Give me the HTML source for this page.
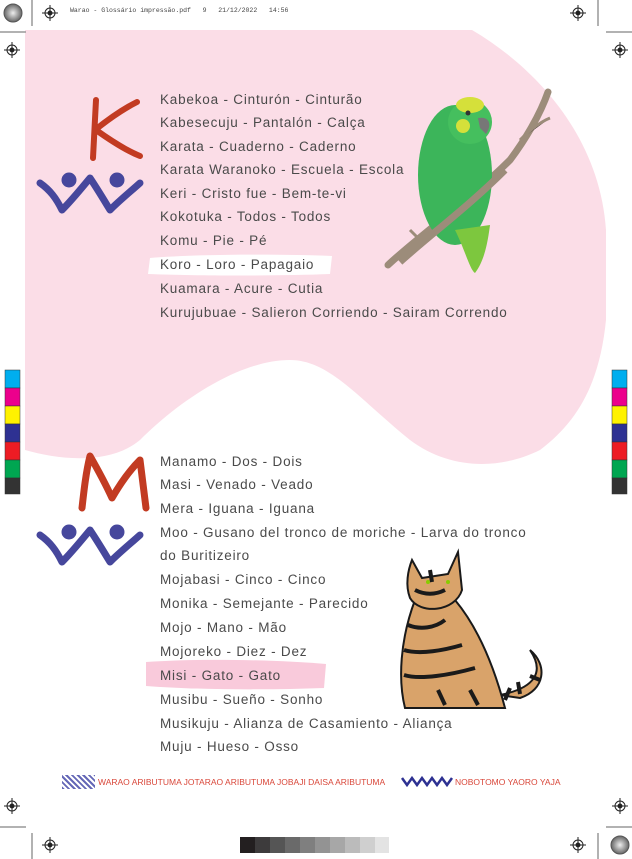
<!DOCTYPE html>
<html><head><meta charset="utf-8"><style>
*{margin:0;padding:0;box-sizing:border-box}
body{width:632px;height:859px;position:relative;background:#fff;overflow:hidden;font-family:"Liberation Sans",sans-serif}
.t{position:absolute;left:160px;font-size:13.5px;color:#4a4a4a;letter-spacing:0.8px;white-space:nowrap;line-height:16px}
.abs{position:absolute}
</style></head><body>
<svg class="abs" style="left:0;top:0" width="632" height="859">
<defs>
<g id="reg" fill="none" stroke="#222" stroke-width="1"><circle cx="0" cy="0" r="5"/><circle cx="0" cy="0" r="2" fill="#222"/><line x1="-8" y1="0" x2="8" y2="0"/><line x1="0" y1="-8" x2="0" y2="8"/></g>
<radialGradient id="g"><stop offset="0" stop-color="#eee"/><stop offset="1" stop-color="#666"/></radialGradient>
</defs>
<!-- pink shape -->
<path d="M25 30 L472 30 C540 70 600 140 606 230 L606 320 C600 380 580 420 540 450 C500 470 450 470 410 440 C360 400 330 360 290 360 C240 360 180 400 140 440 C110 465 60 460 25 450 Z" fill="#fbdde7"/>
<!-- highlights -->
<path d="M150 258 C200 254 280 254 332 256 L330 274 C280 276 200 276 148 274 Z" fill="#fff"/>
<path d="M146 662 C200 658 280 660 326 664 L324 688 C270 690 200 690 146 686 Z" fill="#f9cadb"/>
<!-- crop marks -->
<g stroke="#999" stroke-width="1.5"><line x1="0" y1="32" x2="26" y2="32"/><line x1="606" y1="32" x2="632" y2="32"/><line x1="32" y1="0" x2="32" y2="26"/><line x1="598" y1="0" x2="598" y2="26"/><line x1="0" y1="827" x2="26" y2="827"/><line x1="606" y1="827" x2="632" y2="827"/><line x1="32" y1="833" x2="32" y2="859"/><line x1="598" y1="833" x2="598" y2="859"/></g>
<use href="#reg" x="50" y="13"/><use href="#reg" x="578" y="13"/><use href="#reg" x="12" y="50"/><use href="#reg" x="620" y="50"/><use href="#reg" x="12" y="806"/><use href="#reg" x="620" y="806"/><use href="#reg" x="50" y="845"/><use href="#reg" x="578" y="845"/>
<circle cx="13" cy="13" r="9" fill="url(#g)" stroke="#555"/><circle cx="620" cy="845" r="9" fill="url(#g)" stroke="#555"/>
<!-- color bars -->
<g stroke="#333" stroke-width="0.5">
<rect x="5" y="370" width="15" height="18" fill="#00aeef"/><rect x="5" y="388" width="15" height="18" fill="#ec008c"/><rect x="5" y="406" width="15" height="18" fill="#fff200"/><rect x="5" y="424" width="15" height="18" fill="#2e3192"/><rect x="5" y="442" width="15" height="18" fill="#ed1c24"/><rect x="5" y="460" width="15" height="18" fill="#00a651"/><rect x="5" y="478" width="15" height="16" fill="#333"/>
<rect x="612" y="370" width="15" height="18" fill="#00aeef"/><rect x="612" y="388" width="15" height="18" fill="#ec008c"/><rect x="612" y="406" width="15" height="18" fill="#fff200"/><rect x="612" y="424" width="15" height="18" fill="#2e3192"/><rect x="612" y="442" width="15" height="18" fill="#ed1c24"/><rect x="612" y="460" width="15" height="18" fill="#00a651"/><rect x="612" y="478" width="15" height="16" fill="#333"/>
</g>
<!-- gray scale -->
<rect x="240" y="837" width="15" height="16" fill="#231f20"/><rect x="255" y="837" width="15" height="16" fill="#3d3b3c"/><rect x="270" y="837" width="15" height="16" fill="#555"/><rect x="285" y="837" width="15" height="16" fill="#6a6a6a"/><rect x="300" y="837" width="15" height="16" fill="#7f7f7f"/><rect x="315" y="837" width="15" height="16" fill="#939393"/><rect x="330" y="837" width="15" height="16" fill="#a7a7a7"/><rect x="345" y="837" width="15" height="16" fill="#bbb"/><rect x="360" y="837" width="15" height="16" fill="#cfcfcf"/><rect x="375" y="837" width="14" height="16" fill="#e3e3e3"/>
<!-- K -->
<path d="M96 100 C95 120 94 140 93 158 M95 130 C110 118 125 108 137 102 M96 130 C110 140 125 150 140 156" stroke="#c23b22" stroke-width="6" fill="none" stroke-linecap="round"/>
<!-- W glyphs -->
<g id="w" fill="none" stroke="#46479c" stroke-width="7" stroke-linecap="round" stroke-linejoin="round">
<path d="M40 183 C50 190 56 198 62 210 C72 200 80 190 90 178 C98 190 104 200 110 210 C120 200 130 192 140 183"/>
<circle cx="69" cy="180" r="4" fill="#46479c"/><circle cx="117" cy="180" r="4" fill="#46479c"/>
</g>
<use href="#w" x="0" y="352"/>
<!-- M -->
<path d="M82 508 C84 490 86 472 90 456 C98 470 106 485 112 498 C120 484 130 470 140 460 C142 476 144 492 146 508" stroke="#c23b22" stroke-width="7" fill="none" stroke-linecap="round" stroke-linejoin="round"/>
<!-- parrot -->
<path d="M388 265 C420 235 470 200 510 160 C525 140 540 115 548 92" stroke="#9c8c7a" stroke-width="7" fill="none" stroke-linecap="round"/>
<path d="M520 140 C530 130 540 122 550 118 M420 240 L410 230" stroke="#9c8c7a" stroke-width="3"/>
<ellipse cx="455" cy="175" rx="37" ry="70" fill="#3cb55a"/>
<ellipse cx="470" cy="122" rx="22" ry="22" fill="#45bf5e"/>
<ellipse cx="470" cy="105" rx="14" ry="8" fill="#d5e03a"/>
<ellipse cx="463" cy="126" rx="7" ry="7" fill="#d5e03a"/>
<path d="M478 118 C490 116 492 125 486 134 L480 128 Z" fill="#777"/>
<circle cx="468" cy="113" r="2.5" fill="#333"/>
<path d="M455 230 C465 250 470 270 475 273 C485 260 488 240 490 225 Z" fill="#7dc73e"/>
<path d="M400 262 C430 235 470 205 505 170" stroke="#9c8c7a" stroke-width="7" fill="none"/>
<!-- cat -->
<path d="M520 698 C545 690 548 665 530 650 C545 672 535 688 500 695 Z" fill="#d9a36a" stroke="#1a1a1a" stroke-width="2"/>
<path d="M415 600 C400 640 398 680 405 708 L505 708 C495 670 480 630 455 600 Z" fill="#d9a36a" stroke="#1a1a1a" stroke-width="2"/>
<path d="M412 560 L422 578 L448 574 L458 552 L462 590 C455 612 420 615 410 598 C405 585 408 570 412 560 Z" fill="#d9a36a" stroke="#1a1a1a" stroke-width="2"/>
<g stroke="#1a1a1a" stroke-width="4" fill="none">
<path d="M408 625 C420 630 435 628 445 620 M404 650 C420 655 445 650 462 645 M404 675 C420 680 450 675 475 668 M415 590 C425 595 435 595 445 590 M505 700 L510 688 M520 694 L518 682 M530 676 L540 680 M438 690 L445 705 M470 690 L478 705 M430 570 L432 582"/>
</g>
<circle cx="428" cy="582" r="2" fill="#8c0"/><circle cx="448" cy="582" r="2" fill="#8c0"/>
</svg>
<div class="abs" style="left:70px;top:7px;font-family:'Liberation Mono',monospace;font-size:6.5px;color:#444;white-space:pre">Warao - Glossário impressão.pdf   9   21/12/2022   14:56</div>
<div class="t" style="top:92px">Kabekoa - Cinturón - Cinturão</div>
<div class="t" style="top:115px">Kabesecuju - Pantalón - Calça</div>
<div class="t" style="top:139px">Karata - Cuaderno - Caderno</div>
<div class="t" style="top:162px">Karata Waranoko - Escuela - Escola</div>
<div class="t" style="top:186px">Keri - Cristo fue - Bem-te-vi</div>
<div class="t" style="top:209px">Kokotuka - Todos - Todos</div>
<div class="t" style="top:233px">Komu - Pie - Pé</div>
<div class="t" style="top:257px">Koro - Loro - Papagaio</div>
<div class="t" style="top:281px">Kuamara - Acure - Cutia</div>
<div class="t" style="top:305px">Kurujubuae - Salieron Corriendo - Sairam Correndo</div>
<div class="t" style="top:454px">Manamo - Dos - Dois</div>
<div class="t" style="top:477px">Masi - Venado - Veado</div>
<div class="t" style="top:501px">Mera - Iguana - Iguana</div>
<div class="t" style="top:525px">Moo - Gusano del tronco de moriche - Larva do tronco</div>
<div class="t" style="top:548px">do Buritizeiro</div>
<div class="t" style="top:572px">Mojabasi - Cinco - Cinco</div>
<div class="t" style="top:596px">Monika - Semejante - Parecido</div>
<div class="t" style="top:620px">Mojo - Mano - Mão</div>
<div class="t" style="top:644px">Mojoreko - Diez - Dez</div>
<div class="t" style="top:668px">Misi - Gato - Gato</div>
<div class="t" style="top:692px">Musibu - Sueño - Sonho</div>
<div class="t" style="top:716px">Musikuju - Alianza de Casamiento - Aliança</div>
<div class="t" style="top:739px">Muju - Hueso - Osso</div>
<div class="abs" style="left:62px;top:775px;width:33px;height:14px;background:repeating-linear-gradient(45deg,#5558b0 0 2px,#fff 2px 4px),#5558b0;opacity:.9"></div>
<div class="abs" style="left:98px;top:777px;font-size:8.5px;color:#d9473a;white-space:nowrap">WARAO ARIBUTUMA JOTARAO ARIBUTUMA JOBAJI DAISA ARIBUTUMA</div>
<svg class="abs" style="left:400px;top:775px" width="54" height="12"><path d="M2 3 L7 10 L12 3 L17 10 L22 3 L27 10 L32 3 L37 10 L42 3 L47 10 L52 3" stroke="#2e3192" stroke-width="2.5" fill="none"/></svg>
<div class="abs" style="left:455px;top:777px;font-size:8.5px;color:#d9473a;white-space:nowrap">NOBOTOMO YAORO YAJA</div>
</body></html>
